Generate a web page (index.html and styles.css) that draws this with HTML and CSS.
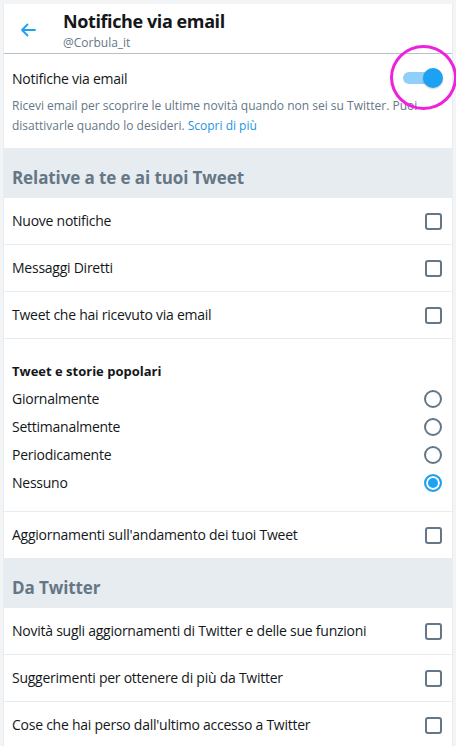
FILE: index.html
```html
<!DOCTYPE html>
<html lang="it">
<head>
<meta charset="utf-8">
<title>Notifiche via email</title>
<link rel="stylesheet" href="styles.css">
</head>
<body>
<div class="card">
  <header class="header">
    <div class="back">
      <svg width="16" height="14" viewBox="0 0 16 14"><path d="M15 7H2M7.5 1.5L2 7l5.5 5.5" fill="none" stroke="#1da1f2" stroke-width="1.8" stroke-linecap="round" stroke-linejoin="round"/></svg>
    </div>
    <div class="titles">
      <h1 class="title">Notifiche via email</h1>
      <div class="handle">@Corbula_it</div>
    </div>
  </header>

  <section class="master">
    <div class="master-row">
      <span class="label">Notifiche via email</span>
      <div class="toggle"><span class="track"></span><span class="knob"></span></div>
      <span class="annot"></span>
    </div>
    <p class="desc">Ricevi email per scoprire le ultime novità quando non sei su Twitter. Puoi disattivarle quando lo desideri. <a class="link">Scopri di più</a></p>
  </section>

  <h2 class="section">Relative a te e ai tuoi Tweet</h2>
  <div class="row"><span class="label">Nuove notifiche</span><span class="check"></span></div>
  <div class="row"><span class="label">Messaggi Diretti</span><span class="check"></span></div>
  <div class="row"><span class="label">Tweet che hai ricevuto via email</span><span class="check"></span></div>
  <div class="group">
    <div class="group-title">Tweet e storie popolari</div>
    <div class="radio-row"><span class="label">Giornalmente</span><span class="radio"></span></div>
    <div class="radio-row"><span class="label">Settimanalmente</span><span class="radio"></span></div>
    <div class="radio-row"><span class="label">Periodicamente</span><span class="radio"></span></div>
    <div class="radio-row"><span class="label">Nessuno</span><span class="radio on"></span></div>
  </div>
  <div class="row last"><span class="label">Aggiornamenti sull'andamento dei tuoi Tweet</span><span class="check"></span></div>

  <h2 class="section section-2">Da Twitter</h2>
  <div class="row"><span class="label">Novità sugli aggiornamenti di Twitter e delle sue funzioni</span><span class="check"></span></div>
  <div class="row"><span class="label">Suggerimenti per ottenere di più da Twitter</span><span class="check"></span></div>
  <div class="row"><span class="label">Cose che hai perso dall'ultimo accesso a Twitter</span><span class="check"></span></div>
</div>
</body>
</html>
```

FILE: styles.css
```css
html, body {
  margin: 0;
  padding: 0;
}
body {
  background: #f2f4f5;
  font-family: "Open Sans", "Noto Sans", sans-serif;
  color: #14171a;
  padding: 4px 3px 0;
  height: 746px;
  box-sizing: border-box;
  overflow: hidden;
}
.card {
  background: #fff;
  border-left: 1px solid #e6ecf0;
  border-right: 1px solid #e6ecf0;
  height: 100%;
}
.header {
  display: flex;
  align-items: flex-start;
  height: 49px;
  border-bottom: 1px solid #b8c0c6;
}
.back {
  width: 59px;
  padding: 19px 0 0 16px;
  box-sizing: border-box;
}
.back svg { display: block; }
.titles {
  display: flex;
  flex-direction: column;
}
.title {
  margin: 0;
  font-size: 18px;
  letter-spacing: -0.4px;
  font-weight: 700;
  line-height: 24px;
  padding-top: 5px;
}
.handle {
  font-size: 12px;
  color: #657786;
  line-height: 18px;
  margin-top: 1px;
}
.master {
  padding: 10px 8px 12px 8px;
  border-bottom: 1px solid #e6ecf0;
}
.master-row {
  position: relative;
  display: flex;
  align-items: center;
  justify-content: space-between;
  height: 28px;
}
.label {
  font-size: 14px;
  line-height: 20px;
  letter-spacing: -0.25px;
}
.master-row .label { margin-top: 1px; }
.toggle {
  position: relative;
  width: 40px;
  height: 20px;
  margin-right: 1px;
}
.track {
  position: absolute;
  left: 0;
  top: 4px;
  width: 34px;
  height: 12px;
  border-radius: 6px;
  background: #8ed0fa;
}
.knob {
  position: absolute;
  right: 0;
  top: 0;
  width: 20px;
  height: 20px;
  border-radius: 50%;
  background: #1da1f2;
  box-shadow: 0 1px 2px rgba(0,0,0,0.2);
}
.annot {
  position: absolute;
  right: -13px;
  top: -19px;
  width: 61px;
  height: 59px;
  border: 3px solid #ee22dd;
  border-radius: 50%;
  pointer-events: none;
}
.desc {
  margin: 4px 0 0;
  font-size: 12px;
  line-height: 20px;
  color: #657786;
}
.link { color: #1b95e0; }
.section {
  margin: 0;
  background: #e6ecf0;
  color: #657786;
  font-size: 17px;
  letter-spacing: -0.1px;
  font-weight: 700;
  line-height: 24px;
  padding: 17px 8px 8px;
}
.section-2 { padding-top: 18px; }
.row {
  display: flex;
  align-items: center;
  justify-content: space-between;
  height: 46px;
  padding: 0 10px 0 8px;
  border-bottom: 1px solid #e6ecf0;
}
.row.last { border-bottom: 0; }
.check {
  width: 13px;
  height: 13px;
  border: 2px solid #657786;
  border-radius: 3px;
  flex: none;
}
.group {
  padding: 18px 10px 14px 8px;
  border-bottom: 1px solid #e6ecf0;
}
.group-title {
  font-size: 13px;
  font-weight: 700;
  line-height: 28px;
}
.radio-row {
  display: flex;
  align-items: center;
  justify-content: space-between;
  height: 28px;
}
.radio {
  width: 14px;
  height: 14px;
  border: 2px solid #657786;
  border-radius: 50%;
  flex: none;
}
.radio.on {
  border-color: #1da1f2;
  background: #1da1f2;
  box-shadow: inset 0 0 0 2px #fff;
}
```
